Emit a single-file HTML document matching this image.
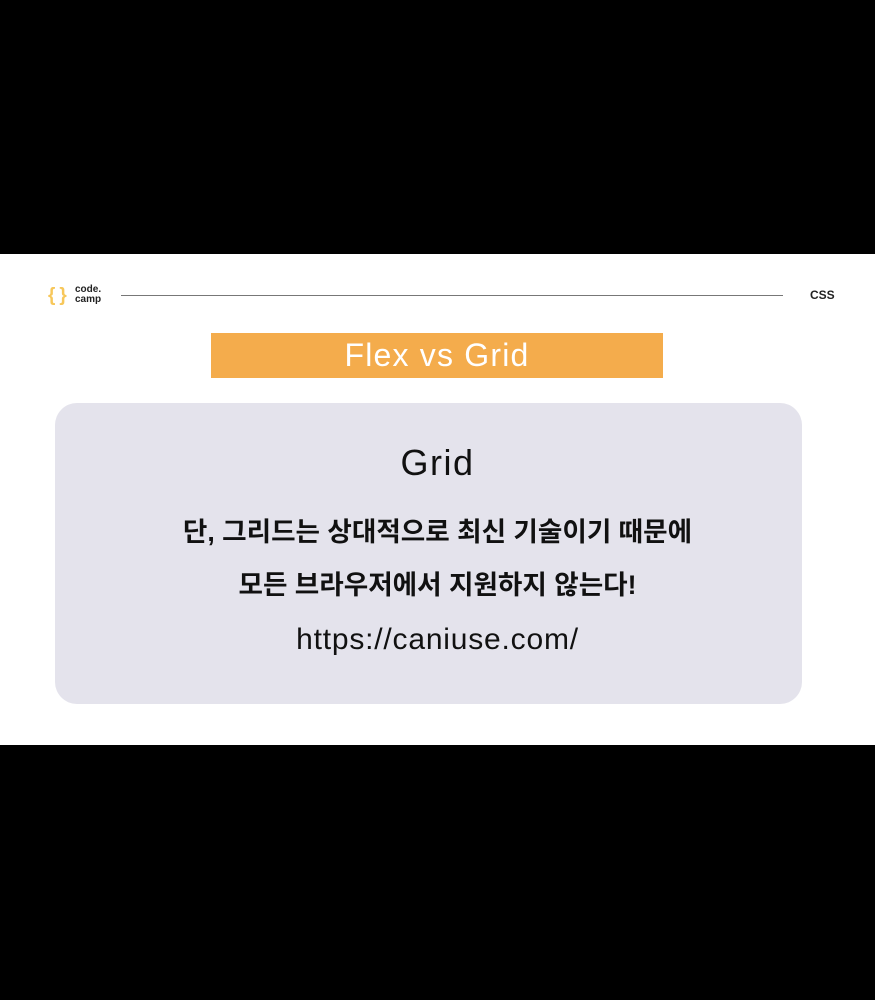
<!DOCTYPE html>
<html><head><meta charset="utf-8"><style>
body{margin:0;width:875px;height:1000px;background:#000;position:relative;overflow:hidden;font-family:"Liberation Sans","Noto Sans CJK KR",sans-serif}
.slide{position:absolute;left:0;top:254px;width:875px;height:491px;background:#fff}
.t{position:absolute;left:0;width:875px;text-align:center;color:#111}
</style></head><body>
<div class="slide">
  <div style="position:absolute;left:48px;top:31px;color:#f7c75a;font-size:19px;font-weight:bold;letter-spacing:4px">{}</div>
  <div style="position:absolute;left:75px;top:31px;font-size:10px;line-height:10px;font-weight:bold;color:#222">code.<br>camp</div>
  <div style="position:absolute;left:121px;top:41px;width:662px;height:1px;background:#777"></div>
  <div style="position:absolute;left:810px;top:34px;font-size:12px;font-weight:bold;color:#222">CSS</div>
  <div style="position:absolute;left:211px;top:79px;width:452px;height:45px;background:#f4ac4c;color:#fff;font-size:32px;letter-spacing:1.2px;text-align:center;line-height:45px">Flex vs Grid</div>
  <div style="position:absolute;left:55px;top:149px;width:747px;height:301px;background:#e4e3ec;border-radius:22px"></div>
  <div class="t" style="top:188px;font-size:36px;letter-spacing:1.5px">Grid</div>
  <div class="t" style="top:256px;font-size:26.6px;font-weight:bold">단, 그리드는 상대적으로 최신 기술이기 때문에</div>
  <div class="t" style="top:309px;font-size:26.6px;font-weight:bold">모든 브라우저에서 지원하지 않는다!</div>
  <div class="t" style="top:369px;font-size:30px;letter-spacing:0.8px">https://caniuse.com/</div>
</div>
</body></html>
